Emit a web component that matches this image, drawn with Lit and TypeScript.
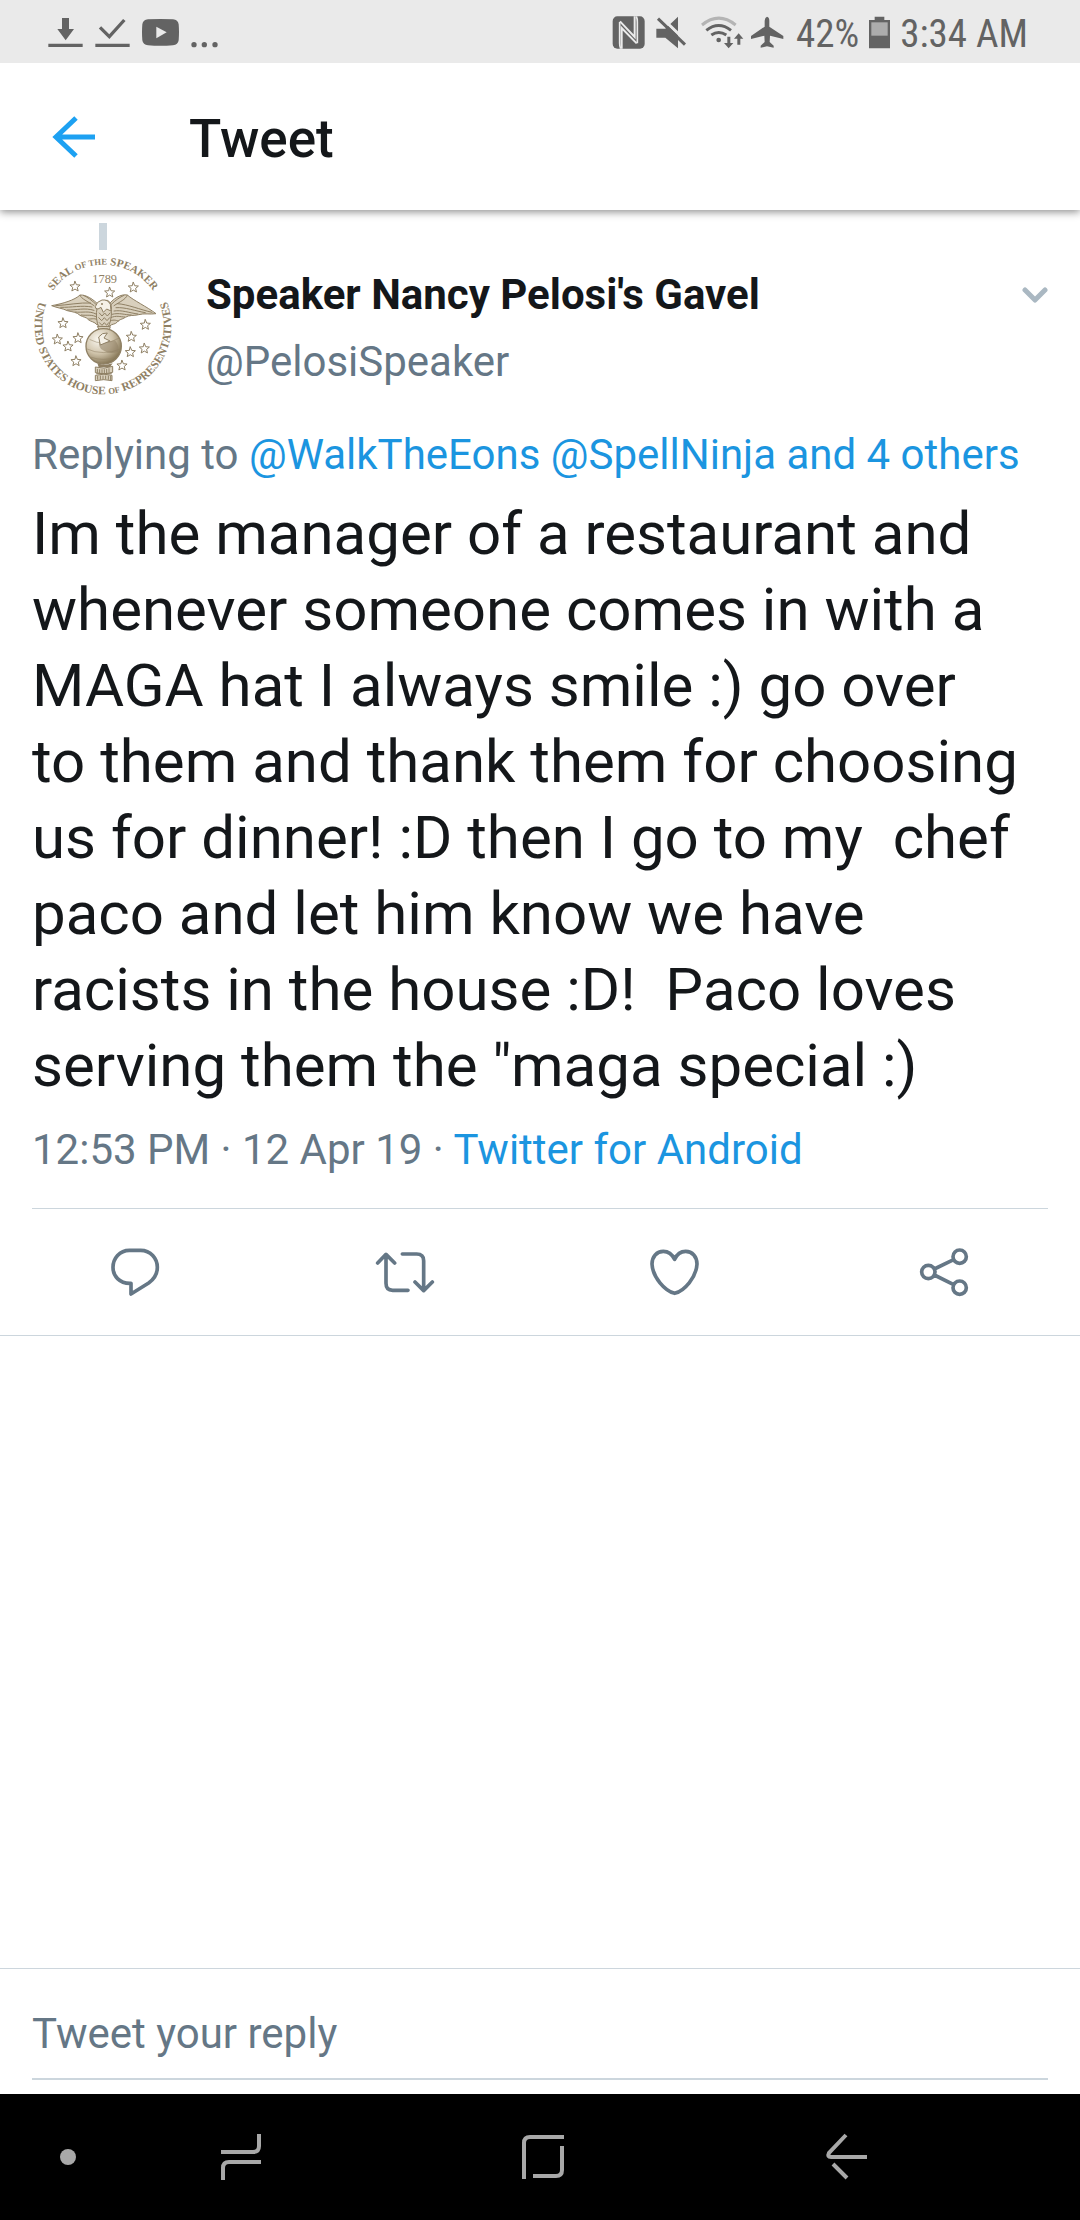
import { LitElement, html, css, svg } from "lit";
import { customElement } from "lit/decorators.js";

const starPoints = (cx: number, cy: number, r: number): string =>
  Array.from({ length: 10 }, (_, i) => {
    const radius = i % 2 === 0 ? r : r * 0.45;
    const a = -Math.PI / 2 + (i * Math.PI) / 5;
    return `${(cx + radius * Math.cos(a)).toFixed(1)},${(cy + radius * Math.sin(a)).toFixed(1)}`;
  }).join(" ");

const sealStars = [
  [165, 215], [269, 233], [340, 218], [129, 325], [112, 374], [174, 370],
  [144, 395], [168, 439], [376, 330], [334, 366], [373, 401], [331, 412], [306, 452],
];

@customElement("status-bar")
class StatusBar extends LitElement {
  static styles = css`
    :host {
      display: flex;
      justify-content: space-between;
      align-items: flex-start;
      height: 63px;
      padding: 0 52px 0 48px;
      background: #eaeaea;
      color: #636363;
      font: 400 39px/68px "Roboto Condensed", Roboto, sans-serif;
    }
    svg {
      display: block;
      height: 63px;
      fill: currentColor;
    }
    .notices,
    .system {
      display: flex;
      align-items: flex-start;
    }
    .notices {
      gap: 12px;
    }
    .system {
      gap: 6px;
    }
    .level {
      margin-left: 6px;
    }
    .battery {
      margin: 0 4px;
    }
    .line {
      fill: none;
      stroke: currentColor;
    }
    .faint {
      opacity: 0.4;
    }
    .cut {
      stroke: #eaeaea;
      fill: none;
    }
    .hole {
      fill: #eaeaea;
    }
  `;

  render() {
    return html`
      <div class="notices">
        <svg width="35" viewBox="54 0 105 189" aria-hidden="true">
          <path d="M96 54h21v33h15l-25 34-25-34h14zM55 131h103v10H55z" />
        </svg>
        <svg width="35" viewBox="195 0 105 189" aria-hidden="true">
          <path d="M196 131h103v10H196z" />
          <path class="line" stroke-width="10" d="M210 82l28 28 45-50" />
        </svg>
        <svg width="37" viewBox="333 0 111 189" aria-hidden="true">
          <path d="M351 58Q388 56 426 58Q441 59 443 73Q445 97 443 121Q441 135 426 136Q388 139 351 136Q336 135 334 121Q332 97 334 73Q336 59 351 58Z" />
          <path class="hole" d="M376 80v35l31-18z" />
        </svg>
        <svg width="27" viewBox="484 0 81 189" aria-hidden="true">
          <circle cx="493" cy="134" r="8" />
          <circle cx="524" cy="134" r="8" />
          <circle cx="556" cy="134" r="8" />
        </svg>
      </div>
      <div class="system">
        <svg width="33" viewBox="36 0 99 189" aria-hidden="true">
          <rect x="38" y="49" width="96" height="97" rx="14" />
          <path class="cut" stroke-width="6" d="M65 146V84l45 46M104 49v62L60 64" />
          <path class="cut" stroke-width="5" d="M62 146Q59 140 59 130V66M109 49Q112 55 112 66V130" />
        </svg>
        <svg width="41" viewBox="153 0 123 189" aria-hidden="true">
          <path d="M169 86h27l38-36v95l-38-32h-27z" />
          <path class="cut" stroke-width="9" d="M180 48L265 130" />
          <path class="line" stroke-width="9" d="M174 56L255 134" />
        </svg>
        <svg width="46" viewBox="294 0 138 189" aria-hidden="true">
          <path class="line faint" stroke-width="9" d="M306 75Q356 34 407 75" />
          <path class="line" stroke-width="9" d="M319 91Q356 62 393 91M334 105Q356 90 379 105" />
          <circle cx="356" cy="120" r="7" />
          <path d="M382 110h9v19h9l-14 16-14-16h10zM412 134h9v-18h9l-14-16-14 16h10z" />
        </svg>
        <svg width="34" viewBox="451 0 102 189" aria-hidden="true">
          <path d="M502 50Q509 52 509 62V80L551 108V117L511 107L510 126L522 137V143L502 139L483 143V137L495 126L494 107L454 117V108L495 80V62Q496 52 502 50Z" />
        </svg>
        <span class="level">42%</span>
        <svg class="battery" width="21" viewBox="267 0 63 189" aria-hidden="true">
          <path d="M284 50h29v10h17v85h-63V60h17z" />
          <path class="hole" opacity="0.55" d="M274 67h49v40h-49z" />
        </svg>
        <time>3:34 AM</time>
      </div>
    `;
  }
}

@customElement("speaker-seal")
class SpeakerSeal extends LitElement {
  static styles = css`
    :host {
      display: block;
    }
    svg {
      display: block;
      width: 142px;
      height: 142px;
    }
    .ring {
      font: 700 33px "Liberation Serif", serif;
      fill: #8f8064;
      text-anchor: middle;
    }
    .low {
      font-size: 35px;
    }
    .small {
      font-size: 26px;
    }
    .year {
      font-size: 37px;
      font-weight: 400;
    }
    .pen {
      fill: none;
      stroke: #8f8064;
      stroke-width: 3;
      stroke-linejoin: round;
      stroke-linecap: round;
    }
    .wash {
      fill: #d9d0bd;
      stroke: #8f8064;
      stroke-width: 3;
      stroke-linejoin: round;
    }
    .pale {
      fill: #f5f1e8;
    }
    .dark {
      fill: #8f8064;
    }
  `;

  render() {
    return html`
      <svg viewBox="36 120 426 426" role="img" aria-label="Seal">
        <defs>
          <path id="top" d="M65 333A184 184 0 0 1 433 333" />
          <path id="low" d="M105 187A205 205 0 1 0 393 187" />
          <radialGradient id="ball" cx="0.35" cy="0.3" r="0.75">
            <stop offset="0" stop-color="#fbf8f1" />
            <stop offset="0.55" stop-color="#cfc3aa" />
            <stop offset="1" stop-color="#80704f" />
          </radialGradient>
        </defs>
        <text class="ring"><textPath href="#top" startOffset="50%">SEAL <tspan class="small">OF THE</tspan> SPEAKER</textPath></text>
        <text class="ring low"><textPath href="#low" startOffset="50%">UNITED STATES HOUSE <tspan class="small">OF</tspan> REPRESENTATIVES</textPath></text>
        <text class="ring year" x="254" y="205">1789</text>
        ${sealStars.map(([x, y]) => svg`<polygon class="pen" points=${starPoints(x, y, 16)} />`)}

        <path class="wash" d="M238 272C220 252 198 239 180 240C165 255 128 266 95 272C112 279 128 280 142 287C158 291 170 291 180 301C190 307 200 306 205 314C214 321 222 319 232 330L246 302Z" />
        <path class="wash" d="M264 272C278 252 302 236 322 240C340 256 382 276 408 296C390 299 372 294 356 299C340 303 328 299 316 307C306 314 298 312 292 321C284 330 276 325 268 334L252 302Z" />
        <path class="pen" d="M107 272C145 270 180 262 212 264M122 277C155 278 184 270 216 276M142 285C170 286 194 277 222 286M165 291C188 294 206 286 228 297M184 300C200 303 214 296 234 308M206 312C216 313 224 307 238 317M180 241C184 252 202 258 222 272M190 241C202 246 216 256 230 270" />
        <path class="pen" d="M396 292C360 284 324 268 292 266M376 293C346 288 316 276 288 278M354 297C328 294 306 284 282 288M334 300C314 300 298 292 276 298M314 306C300 306 290 300 272 308M296 318C286 316 280 312 266 320M322 241C316 254 300 260 282 272M312 241C300 246 286 256 274 268" />
        <path class="wash" d="M232 274Q244 254 262 256Q276 262 274 284Q276 318 262 340H238Q224 312 232 274Z" />
        <path class="wash pale" d="M226 275Q230 259 246 255Q264 253 271 268L273 288L260 282L250 292L243 277L234 282Q225 282 226 275Z" />
        <circle class="dark" cx="246" cy="267" r="3" />
        <path class="pen" d="M238 294l8 9 8-9 8 9 8-9M236 308l9 9 8-9 8 9 8-9M238 323l8 8 7-8 7 8 6-8" />
        <path class="wash" d="M232 334l9 17-13 8 13-1 8-18 4 19 8-18 4 17 12 3-11-11 5-15Z" />

        <circle cx="251" cy="394" r="53" fill="url(#ball)" stroke="#8f8064" stroke-width="4" />
        <path class="pen" d="M210 374Q250 396 296 370M201 402Q248 424 302 402M214 427Q250 440 286 427" opacity="0.5" />
        <path class="dark" opacity="0.55" d="M240 372q18 12 45 4q15 18 9 34q-24 10-42-3q-22-8-12-35z" />
        <path class="wash pale" d="M236 366q10-14 26-12l-10 15 18 9-29 12z" stroke="none" />
        <path class="dark" d="M232 444q20 10 46 1l-8 12h-34z" />
        <path class="wash" d="M226 456q26 8 52-2v18q-26 9-52 1zM226 481q26-7 50 0v16q-25-6-50 0z" />
        <path class="pen" d="M232 463v9m7-8v10m7-10v11m7-11v10m7-11v10m7-12v10M230 476h44M233 484v9m8-10v10m8-10v10m8-10v9m8-9v10m7-9v10" />
      </svg>
    `;
  }
}

@customElement("app-root")
class AppRoot extends LitElement {
  static styles = css`
    :host {
      display: flex;
      flex-direction: column;
      min-height: 100vh;
      background: #fff;
      color: #14171a;
      font: 400 42px/50px Roboto, sans-serif;
    }
    * {
      box-sizing: border-box;
    }
    h1,
    h2,
    p {
      margin: 0;
    }
    a {
      color: #1b95e0;
      text-decoration: none;
    }
    button {
      display: flex;
      align-items: center;
      justify-content: center;
      margin: 0;
      padding: 0;
      border: 0;
      background: none;
    }
    svg {
      display: block;
      fill: none;
      stroke: currentColor;
    }
    .bar {
      display: flex;
      align-items: center;
      gap: 83px;
      height: 147px;
      padding: 0 40px;
      clip-path: inset(0 0 -16px 0);
      box-shadow: 0 2px 8px rgba(0, 0, 0, 0.45);
    }
    .bar button {
      color: #1da1f2;
    }
    .title {
      padding-top: 4px;
      font-size: 53px;
      font-weight: 500;
      line-height: 64px;
    }
    .tweet {
      padding: 13px 32px 0;
    }
    .author {
      display: flex;
      gap: 32px;
    }
    .portrait {
      display: flex;
      flex-direction: column;
      align-items: center;
      gap: 5px;
    }
    .thread {
      width: 8px;
      height: 27px;
      background: #ccd6dd;
    }
    .names {
      display: flex;
      flex: 1;
      flex-direction: column;
      gap: 17px;
      padding-top: 47px;
    }
    .name {
      font-size: 42px;
      font-weight: 700;
      line-height: 50px;
    }
    .muted {
      color: #657786;
    }
    .menu {
      align-self: flex-start;
      height: 50px;
      margin-top: 47px;
      color: #aab8c2;
    }
    .replying {
      padding-top: 33px;
    }
    .text {
      padding: 16px 24px 21px 0;
      font-size: 60px;
      line-height: 76px;
      white-space: pre-wrap;
    }
    .stamp {
      padding-bottom: 33px;
      border-bottom: 1px solid #ccd6dd;
    }
    .actions {
      display: grid;
      grid-template-columns: repeat(4, 1fr);
      height: 127px;
      border-bottom: 1px solid #ccd6dd;
      color: #657786;
    }
    .actions button {
      color: inherit;
    }
    .space {
      flex: 1;
    }
    .reply {
      padding: 38px 32px 14px;
      border-top: 1px solid #ccd6dd;
    }
    .reply input {
      display: block;
      width: 100%;
      height: 73px;
      padding: 0 0 18px;
      border: 0;
      border-bottom: 2px solid #ccd6dd;
      border-radius: 0;
      outline: 0;
      background: none;
      color: #14171a;
      font: inherit;
    }
    .reply input::placeholder {
      color: #657786;
      opacity: 1;
    }
    .keys {
      display: grid;
      grid-template-columns: 44px repeat(3, 1fr);
      height: 126px;
      padding: 0 83px 0 46px;
      background: #000;
      color: #a8a8a8;
    }
    .keys button {
      color: inherit;
    }
    .dot {
      width: 16px;
      height: 16px;
      border-radius: 50%;
      background: currentColor;
    }
  `;

  private replyTo = ["@WalkTheEons", "@SpellNinja", "and 4 others"];

  private actions = [
    {
      label: "Reply",
      box: "75 156 180 180",
      d: "M148 181H182C212 181 232 206 232 232C232 252 220 269 206 279L153 312V280H150C118 280 99 258 99 232C99 206 119 181 148 181Z",
    },
    {
      label: "Retweet",
      box: "885 156 180 180",
      d: "M918 194V280Q918 301 938 301H984M893 219L918 193L944 219M967 192H1010Q1031 192 1031 212V300M1005 276L1031 302L1057 276",
    },
    {
      label: "Like",
      box: "75 156 180 180",
      d: "M164 208C156 192 145 184 130 184C110 184 96 200 96 222C98 262 135 303 164 310C193 303 229 262 231 222C231 200 217 184 197 184C182 184 171 192 164 208Z",
    },
    {
      label: "Share",
      box: "885 156 180 180",
      d: "M905 246a20 20 0 1 0 40 0a20 20 0 1 0-40 0M999 200a20 20 0 1 0 40 0a20 20 0 1 0-40 0M999 293a20 20 0 1 0 40 0a20 20 0 1 0-40 0M943 237L1001 209M943 255L1001 284",
    },
  ];

  private keys = [
    { label: "Recents", d: "M2 19H34Q40 19 40 13V1M42 29H10Q4 29 4 35V47" },
    { label: "Home", d: "M3 46V10Q3 4 9 4H43M41 13V37Q41 43 35 43H12" },
    { label: "Back", d: "M22 2L5 20Q3 24 7 24H43M9 31L23 45" },
  ];

  render() {
    return html`
      <status-bar></status-bar>
      <header class="bar">
        <button aria-label="Back">
          <svg width="66" height="66" viewBox="0 0 66 66" stroke-width="5">
            <path d="M55 33H16M36 14L16 33L36 52" />
          </svg>
        </button>
        <h1 class="title">Tweet</h1>
      </header>
      <article class="tweet">
        <div class="author">
          <div class="portrait">
            <div class="thread"></div>
            <speaker-seal></speaker-seal>
          </div>
          <div class="names">
            <h2 class="name">Speaker Nancy Pelosi's Gavel</h2>
            <span class="muted">@PelosiSpeaker</span>
          </div>
          <button class="menu" aria-label="More">
            <svg width="26" height="18" viewBox="0 0 26 18" stroke-width="5" stroke-linecap="round" stroke-linejoin="round">
              <path d="M3 4L13 14L23 4" />
            </svg>
          </button>
        </div>
        <p class="replying muted">Replying to ${this.replyTo.map((name) => html`<a href="#">${name}</a> `)}</p>
        <p class="text">Im the manager of a restaurant and whenever someone comes in with a MAGA hat I always smile :) go over to them and thank them for choosing us for dinner! :D then I go to my  chef paco and let him know we have racists in the house :D!  Paco loves serving them the "maga special :)</p>
        <p class="stamp muted">12:53 PM · 12 Apr 19 · <a href="#">Twitter for Android</a></p>
      </article>
      <div class="actions">
        ${this.actions.map(
          (a) => html`<button aria-label=${a.label}>
            <svg width="60" height="60" viewBox=${a.box} stroke-width="11" stroke-linecap="round" stroke-linejoin="round">
              <path d=${a.d} />
            </svg>
          </button>`
        )}
      </div>
      <div class="space"></div>
      <form class="reply">
        <input type="text" aria-label="Tweet your reply" placeholder="Tweet your reply" />
      </form>
      <nav class="keys">
        <button aria-label="Pin"><span class="dot"></span></button>
        ${this.keys.map(
          (k) => html`<button aria-label=${k.label}>
            <svg width="44" height="48" viewBox="0 0 44 48" stroke-width="4"><path d=${k.d} /></svg>
          </button>`
        )}
      </nav>
    `;
  }
}
